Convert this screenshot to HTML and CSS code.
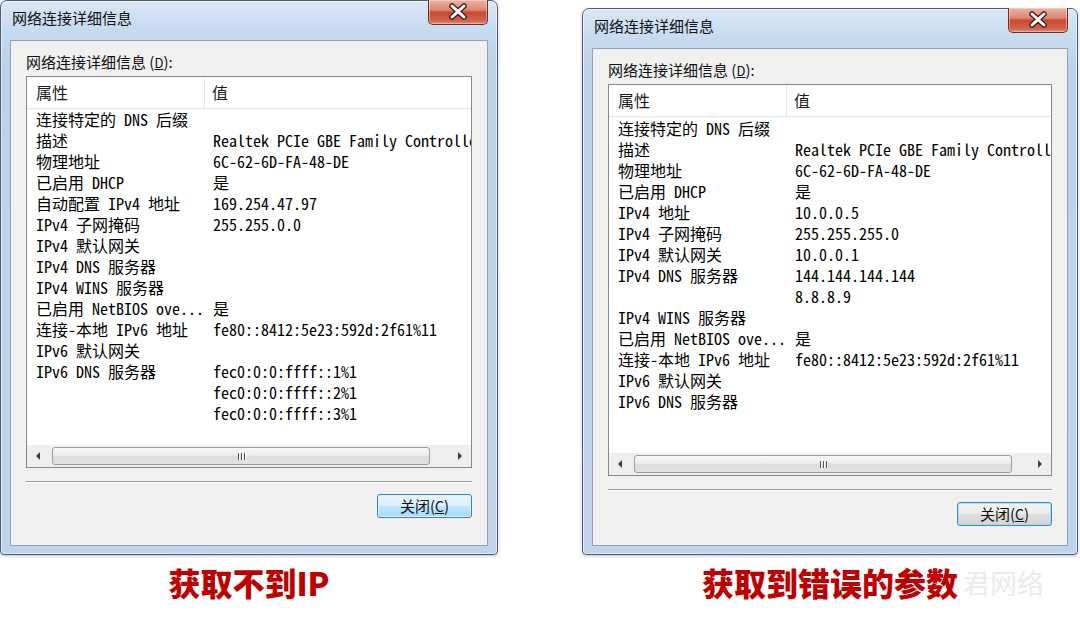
FILE: index.html
```html
<!DOCTYPE html>
<html lang="zh-CN">
<head>
    <meta charset="UTF-8">
    <meta name="viewport" content="width=device-width, initial-scale=1.0">
    <title>网络连接详细信息</title>
    <link rel="stylesheet" href="styles.css">
</head>
<body>
    <div class="stage">
        <!-- Left dialog: no IP -->
        <div class="window window-left">
            <div class="titlebar">
                <span class="title">网络连接详细信息</span>
                <span class="close-x">
                    <svg width="60" height="25" viewBox="0 0 60 25">
                        <path d="M24 7 L36 18 M36 7 L24 18" stroke="#4a1810" stroke-width="5.5" stroke-linecap="round"/>
                        <path d="M24 7 L36 18 M36 7 L24 18" stroke="#ffffff" stroke-width="3" stroke-linecap="round"/>
                    </svg>
                </span>
            </div>
            <div class="client">
                <div class="field-label">网络连接详细信息 (<u>D</u>):</div>
                <div class="listbox">
                    <div class="list-head">
                        <span class="head-prop">属性</span>
                        <span class="head-val">值</span>
                    </div>
                    <div class="list-body">
                        <div class="row"><span class="prop">连接特定的 DNS 后缀</span><span class="val"></span></div>
                        <div class="row"><span class="prop">描述</span><span class="val val-clip">Realtek PCIe GBE Family Controller</span></div>
                        <div class="row"><span class="prop">物理地址</span><span class="val">6C-62-6D-FA-48-DE</span></div>
                        <div class="row"><span class="prop">已启用 DHCP</span><span class="val">是</span></div>
                        <div class="row"><span class="prop">自动配置 IPv4 地址</span><span class="val">169.254.47.97</span></div>
                        <div class="row"><span class="prop">IPv4 子网掩码</span><span class="val">255.255.0.0</span></div>
                        <div class="row"><span class="prop">IPv4 默认网关</span><span class="val"></span></div>
                        <div class="row"><span class="prop">IPv4 DNS 服务器</span><span class="val"></span></div>
                        <div class="row"><span class="prop">IPv4 WINS 服务器</span><span class="val"></span></div>
                        <div class="row"><span class="prop">已启用 NetBIOS ove...</span><span class="val">是</span></div>
                        <div class="row"><span class="prop">连接-本地 IPv6 地址</span><span class="val">fe80::8412:5e23:592d:2f61%11</span></div>
                        <div class="row"><span class="prop">IPv6 默认网关</span><span class="val"></span></div>
                        <div class="row"><span class="prop">IPv6 DNS 服务器</span><span class="val">fec0:0:0:ffff::1%1</span></div>
                        <div class="row"><span class="prop"></span><span class="val">fec0:0:0:ffff::2%1</span></div>
                        <div class="row"><span class="prop"></span><span class="val">fec0:0:0:ffff::3%1</span></div>
                    </div>
                    <div class="hscroll">
                        <span class="arrow arrow-left"></span>
                        <span class="thumb"><i></i><i></i><i></i></span>
                        <span class="track"></span>
                        <span class="arrow arrow-right"></span>
                    </div>
                </div>
                <div class="divider"></div>
                <div class="actions">
                    <button class="btn btn-hot">关闭(<u>C</u>)</button>
                </div>
            </div>
        </div>

        <!-- Right dialog: wrong parameters -->
        <div class="window window-right">
            <div class="titlebar">
                <span class="title">网络连接详细信息</span>
                <span class="close-x">
                    <svg width="60" height="25" viewBox="0 0 60 25">
                        <path d="M24 7 L36 18 M36 7 L24 18" stroke="#4a1810" stroke-width="5.5" stroke-linecap="round"/>
                        <path d="M24 7 L36 18 M36 7 L24 18" stroke="#ffffff" stroke-width="3" stroke-linecap="round"/>
                    </svg>
                </span>
            </div>
            <div class="client">
                <div class="field-label">网络连接详细信息 (<u>D</u>):</div>
                <div class="listbox">
                    <div class="list-head">
                        <span class="head-prop">属性</span>
                        <span class="head-val">值</span>
                    </div>
                    <div class="list-body">
                        <div class="row"><span class="prop">连接特定的 DNS 后缀</span><span class="val"></span></div>
                        <div class="row"><span class="prop">描述</span><span class="val val-clip">Realtek PCIe GBE Family Controller</span></div>
                        <div class="row"><span class="prop">物理地址</span><span class="val">6C-62-6D-FA-48-DE</span></div>
                        <div class="row"><span class="prop">已启用 DHCP</span><span class="val">是</span></div>
                        <div class="row"><span class="prop">IPv4 地址</span><span class="val">10.0.0.5</span></div>
                        <div class="row"><span class="prop">IPv4 子网掩码</span><span class="val">255.255.255.0</span></div>
                        <div class="row"><span class="prop">IPv4 默认网关</span><span class="val">10.0.0.1</span></div>
                        <div class="row"><span class="prop">IPv4 DNS 服务器</span><span class="val">144.144.144.144</span></div>
                        <div class="row"><span class="prop"></span><span class="val">8.8.8.9</span></div>
                        <div class="row"><span class="prop">IPv4 WINS 服务器</span><span class="val"></span></div>
                        <div class="row"><span class="prop">已启用 NetBIOS ove...</span><span class="val">是</span></div>
                        <div class="row"><span class="prop">连接-本地 IPv6 地址</span><span class="val">fe80::8412:5e23:592d:2f61%11</span></div>
                        <div class="row"><span class="prop">IPv6 默认网关</span><span class="val"></span></div>
                        <div class="row"><span class="prop">IPv6 DNS 服务器</span><span class="val"></span></div>
                    </div>
                    <div class="hscroll">
                        <span class="arrow arrow-left"></span>
                        <span class="thumb"><i></i><i></i><i></i></span>
                        <span class="track"></span>
                        <span class="arrow arrow-right"></span>
                    </div>
                </div>
                <div class="divider"></div>
                <div class="actions">
                    <button class="btn">关闭(<u>C</u>)</button>
                </div>
            </div>
        </div>

        <div class="note">获取不到IP</div>
        <div class="note note-right">
            <span class="watermark">君网络</span>
            获取到错误的参数
        </div>
    </div>
</body>
</html>
```

FILE: styles.css
```css
:root {
    --frame-blue: #bfd4ec;
    --frame-edge: #4f5f70;
    --client-bg: #f0f0f0;
    --list-border: #828790;
    --note-red: #c00000;
    --ui-font: "Noto Sans CJK SC", "Noto Sans", sans-serif;
    --mono-font: "Noto Sans Mono CJK SC", "Liberation Mono", "Noto Sans CJK SC", monospace;
}

* {
    box-sizing: border-box;
}

body {
    margin: 0;
    background: #ffffff;
    font-family: var(--ui-font);
    color: #000;
}

.stage {
    display: grid;
    grid-template-columns: 498px 496px;
    grid-template-rows: 555px auto;
    column-gap: 84px;
    width: 1080px;
    height: 620px;
    overflow: hidden;
}

/* ---------- window chrome ---------- */

.window {
    display: flex;
    flex-direction: column;
    border: 1px solid var(--frame-edge);
    border-radius: 7px 7px 4px 4px;
    padding: 0 9px 8px;
    background: linear-gradient(180deg, #dae7f6 0, #c8dbf0 26px, #bcd2eb 60px, var(--frame-blue) 100%);
    box-shadow: inset 0 0 0 1px rgba(255, 255, 255, 0.55), 0 1px 3px rgba(0, 0, 0, 0.25);
}

.window-right {
    margin-top: 8px;
}

.titlebar {
    display: flex;
    align-items: flex-start;
    height: 39px;
}

.title {
    margin-top: 6px;
    padding-left: 2px;
    font-size: 15px;
    line-height: 21px;
    color: #111;
}

.close-x {
    display: block;
    margin-left: auto;
    margin-top: -1px;
    width: 60px;
    height: 25px;
    border: 1px solid #7a2c20;
    border-top: none;
    border-radius: 0 0 5px 5px;
    background: linear-gradient(180deg, #eab3a4 0%, #dd8a75 40%, #c94a33 52%, #d1624a 85%, #dd8a70 100%);
    box-shadow: inset 0 0 0 1px rgba(255, 255, 255, 0.35);
}

.close-x svg {
    display: block;
    margin: -1px 0 0 -1px;
}

.client {
    flex: 1;
    display: flex;
    flex-direction: column;
    border: 1px solid #8fa2b8;
    background: var(--client-bg);
    padding: 11px 15px 19px;
}

.field-label {
    font-size: 15px;
    line-height: 20px;
    margin-bottom: 3px;
    color: #111;
}

.field-label u {
    font-size: 13px;
}

/* ---------- list view ---------- */

.listbox {
    height: 392px;
    display: flex;
    flex-direction: column;
    border: 1px solid var(--list-border);
    background: #fff;
}

.list-head {
    display: flex;
    height: 32px;
    border-bottom: 1px solid #e3e6ea;
    font-size: 16px;
    line-height: 31px;
    color: #1a1a1a;
}

.head-prop {
    width: 178px;
    padding-left: 9px;
    border-right: 1px solid #e3e6ea;
}

.head-val {
    padding-left: 7px;
}

.list-body {
    flex: 1;
    padding-top: 0;
    font-family: var(--mono-font);
    font-size: 16px;
}

.window-right .list-body {
    padding-top: 1px;
}

.row {
    display: flex;
    height: 21px;
    line-height: 21px;
    white-space: nowrap;
}

.prop {
    flex: none;
    width: 178px;
    padding-left: 9px;
}

.val {
    flex: 1;
    min-width: 0;
    padding-left: 8px;
}

/* the description is wider than the column and gets cut at the list edge */
.val-clip {
    overflow-x: clip;
}

.hscroll {
    display: flex;
    align-items: center;
    margin-top: auto;
    height: 22px;
    background: #eeeeee;
}

.arrow {
    flex: none;
    width: 25px;
    height: 22px;
    position: relative;
}

.arrow::after {
    content: "";
    position: absolute;
    top: 7px;
    width: 0;
    height: 0;
    border-top: 4px solid transparent;
    border-bottom: 4px solid transparent;
}

.arrow-left::after {
    left: 9px;
    border-right: 4px solid #404040;
}

.arrow-right::after {
    left: 12px;
    border-left: 4px solid #404040;
}

.thumb {
    flex: none;
    display: flex;
    justify-content: center;
    align-items: center;
    gap: 2px;
    width: 378px;
    height: 18px;
    border: 1px solid #9b9b9b;
    border-radius: 3px;
    background: linear-gradient(180deg, #f7f7f7 0%, #ececec 45%, #dcdcdc 55%, #e2e2e2 100%);
}

.thumb i {
    display: block;
    width: 1px;
    height: 7px;
    background: #555;
    box-shadow: 1px 0 0 #fff;
}

.track {
    flex: 1;
}

/* ---------- bottom buttons ---------- */

.divider {
    margin-top: 13px;
    border-top: 1px solid #a0a0a0;
    border-bottom: 1px solid #ffffff;
}

.actions {
    display: flex;
    justify-content: flex-end;
    margin-top: 11px;
}

.btn {
    width: 95px;
    height: 24px;
    padding: 0;
    border: 1px solid #3c8cc4;
    border-radius: 3px;
    background: linear-gradient(180deg, #f4f4f4 0%, #ebebeb 48%, #dddddd 52%, #d4d4d4 100%);
    box-shadow: inset 0 0 0 1px #a8dcf5;
    font-family: var(--ui-font);
    font-size: 15px;
    line-height: 22px;
    color: #111;
}

.btn-hot {
    border-color: #3c7fb1;
    background: linear-gradient(180deg, #eaf6fd 0%, #d9f0fc 48%, #bee6fd 52%, #a7d9f5 100%);
    box-shadow: inset 0 0 0 1px #dff2fc;
}

.btn u {
    font-size: 14px;
}

/* ---------- captions ---------- */

.note {
    position: relative;
    margin-top: 7px;
    text-align: center;
    font-family: var(--ui-font);
    font-size: 32px;
    font-weight: 900;
    line-height: 40px;
    color: var(--note-red);
}

.watermark {
    position: absolute;
    left: 381px;
    top: 1px;
    font-size: 27px;
    font-weight: 400;
    color: #ebebeb;
}
```
